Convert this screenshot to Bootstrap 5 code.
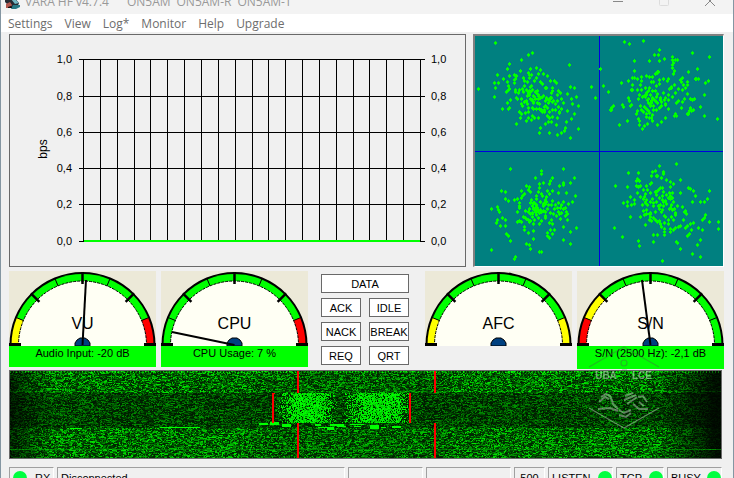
<!DOCTYPE html>
<html lang="en">
<head>
<meta charset="utf-8">
<meta name="viewport" content="width=device-width, initial-scale=1">
<title>VARA HF v4.7.4</title>
<link href="https://cdn.jsdelivr.net/npm/bootstrap@5.3.0/dist/css/bootstrap.min.css" rel="stylesheet">
<style>
body { background: #f0f0f0; color: #000; font: 11px/14px "Liberation Sans", Arial, sans-serif; }
.app-window { border-left: 1px solid #8496a2; border-right: 1px solid #8496a2; }
.title-strip { height: 26px; margin-top: -12px; background: #f3f3f3; color: #999; font: 12px/16px "Open Sans", sans-serif; padding-left: 4px; }
.title-strip button { width: 46px; height: 26px; }
.title-text { gap: 6px; padding-top: 2px; }
.menu-strip { height: 18px; padding: 2px 7px 0; gap: 12px; font: 12px/16px "Open Sans", sans-serif; }
.menu-strip a { color: #6d6d6d; }
.work-area { padding: 2px 9px 0 8px; }
.top-panels { display: grid; grid-template-columns: minmax(0, 457fr) minmax(0, 251fr); gap: 7px; margin-bottom: 4px; }
.speed-panel { border: 1px solid #696969; }
.iq-panel { background: #008080; border: 1px solid #fff; border-top: 2px solid #808080; border-left: 2px solid #808080; }
svg text { font-family: "Liberation Sans", Arial, sans-serif; }
.meter-row { display: grid; grid-template-columns: minmax(0, 299fr) minmax(0, 117fr) minmax(0, 299fr); min-height: 99px; }
.meter-pair { gap: 5px; }
.meter-pair > figure { flex: 1 1 0; }
.meter-face { background: #ece9d8; }
.meter-face text { font-size: 16px; text-anchor: middle; }
.meter-note { background: #0f0; min-height: 21px; }
.meter-note-tall { min-height: 23px; }
.frame-keys { padding: 3px 16px 0 13px; }
.key-grid { display: grid; grid-template-columns: minmax(0, 1fr) minmax(0, 1fr); gap: 5px 8px; }
.key-grid button { height: 19px; border: 1px solid #696969; background: #fff; line-height: 14px; white-space: nowrap; }
.key-wide { grid-column: 1 / 3; }
.waterfall { border: 1px solid #696969; margin-right: 2px; }
.waterfall canvas { height: 87px; image-rendering: pixelated; }
.watermark { right: 61px; top: -25px; width: 72px; height: 84px; }
.status-strip { display: grid; grid-template-columns: minmax(0, 45fr) minmax(0, 288fr) minmax(0, 75fr) minmax(0, 85fr) minmax(0, 31fr) minmax(0, 65fr) minmax(0, 48fr) minmax(0, 55fr); padding-top: 8px; gap: 3px; margin-right: 2px; }
.status-cell { height: 22px; border: 1px solid #fff; border-top-color: #a0a0a0; border-left-color: #a0a0a0; padding: 0 3px; }
.lamp { width: 14px; height: 14px; background: #00ff40; }
</style>
<script src="https://cdn.jsdelivr.net/npm/bootstrap@5.3.0/dist/js/bootstrap.bundle.min.js"></script>
</head>
<body>
<div class="app-window vh-100 overflow-hidden">
  <header class="title-strip d-flex align-items-center">
    <svg width="16" height="16" viewBox="0 0 16 16" aria-hidden="true">
      <path d="M0 4h9l5 6-2 5H6L0 9z" fill="#252b33"/>
      <path d="M1 11l4-2 2 3-2 3H1z" fill="#b45950"/>
      <path d="M6 6l5 1 3 3-4 1z" fill="#74b7c3"/>
      <path d="M8 12h7v2l-4 2H6z" fill="#287985"/>
      <path d="M3 14l3-1 1 2H3z" fill="#111"/>
    </svg>
    <div class="title-text d-flex ms-1 me-auto text-nowrap"><span class="me-2 pe-1">VARA HF v4.7.4</span><span>ON5AM</span><span>ON5AM-R</span><span>ON5AM-T</span></div>
    <button type="button" class="btn p-0 border-0 rounded-0 d-flex align-items-center justify-content-center" aria-label="Minimize"><svg width="10" height="10" viewBox="0 0 10 10"><path d="M0 5.5h10" stroke="#888"/></svg></button>
    <button type="button" class="btn p-0 border-0 rounded-0 d-flex align-items-center justify-content-center" aria-label="Maximize"><svg width="10" height="10" viewBox="0 0 10 10"><rect x=".5" y=".5" width="9" height="9" rx="1" fill="none" stroke="#dcdcdc"/></svg></button>
    <button type="button" class="btn p-0 border-0 rounded-0 d-flex align-items-center justify-content-center" aria-label="Close"><svg width="10" height="10" viewBox="0 0 10 10"><path d="M0 0l10 10M10 0L0 10" stroke="#888"/></svg></button>
  </header>
  <nav class="menu-strip d-flex align-items-center bg-white" aria-label="Main menu">
    <a class="text-decoration-none" href="#">Settings</a>
    <a class="text-decoration-none" href="#">View</a>
    <a class="text-decoration-none" href="#">Log*</a>
    <a class="text-decoration-none" href="#">Monitor</a>
    <a class="text-decoration-none" href="#">Help</a>
    <a class="text-decoration-none" href="#">Upgrade</a>
  </nav>

  <main class="work-area">
    <section class="top-panels">
      <div class="speed-panel">
        <svg id="speed" class="d-block w-100 h-auto" viewBox="0 0 455 231" role="img" aria-label="Speed in bps"></svg>
      </div>
      <div class="iq-panel">
        <svg id="iq" class="d-block w-100 h-100" viewBox="15 18 744 690" preserveAspectRatio="none" shape-rendering="crispEdges" role="img" aria-label="Constellation"></svg>
      </div>
    </section>

    <section class="meter-row">
      <div class="meter-pair d-flex">
        <figure class="m-0">
          <svg class="meter-face d-block w-100 h-auto" viewBox="0 0 147 75" data-label="VU" data-zones="yggggggr" data-needle="77,9"></svg>
          <figcaption class="meter-note text-center">Audio Input: -20 dB</figcaption>
        </figure>
        <figure class="m-0">
          <svg class="meter-face d-block w-100 h-auto" viewBox="0 0 147 75" data-label="CPU" data-zones="gggggggr" data-needle="11,61"></svg>
          <figcaption class="meter-note text-center">CPU Usage: 7 %</figcaption>
        </figure>
      </div>
      <div class="frame-keys">
        <div class="key-grid">
          <button type="button" class="key-wide p-0">DATA</button>
          <button type="button" class="p-0">ACK</button>
          <button type="button" class="p-0">IDLE</button>
          <button type="button" class="p-0">NACK</button>
          <button type="button" class="p-0">BREAK</button>
          <button type="button" class="p-0">REQ</button>
          <button type="button" class="p-0">QRT</button>
        </div>
      </div>
      <div class="meter-pair d-flex">
        <figure class="m-0">
          <svg class="meter-face d-block w-100 h-auto" viewBox="0 0 147 75" data-label="AFC" data-zones="yggggggy"></svg>
        </figure>
        <figure class="m-0">
          <svg class="meter-face d-block w-100 h-auto" viewBox="0 0 147 75" data-label="S/N" data-zones="rygggggg" data-needle="65,9"></svg>
          <figcaption class="meter-note meter-note-tall text-center">S/N (2500 Hz): -2,1 dB</figcaption>
        </figure>
      </div>
    </section>

    <section class="waterfall position-relative">
      <canvas id="fall" class="d-block w-100" width="711" height="87" role="img" aria-label="Waterfall"></canvas>
      <svg class="watermark position-absolute pe-none" viewBox="0 0 72 84" aria-hidden="true">
        <g fill="none" stroke="#b9d8b9" stroke-opacity=".5" stroke-width="1.2">
          <path d="M1 21L36 1 71 21" stroke="#407840"/>
          <path d="M1 62L36 82 71 62"/>
          <circle cx="36" cy="17" r="3" stroke="#407840"/>
          <path d="M34 24h5M34 10h5" stroke="#407840"/>
          <path d="M11 56l6-5 4 2M13 51l5-3 4 2 3 7M37 50l8-3M36 54l12-5M39 58l10-7M50 51l5-1 4 6M51 56l5 4M10 63l12-1 8 3M24 57l6 6M31 64l5 3 7-3M45 58l6 5 9 0M31 69l7 2 5-4" stroke-width="2"/>
        </g>
        <g font-size="10" font-weight="700" fill="#d0e0d0" fill-opacity=".55" text-anchor="middle"><text x="18" y="33">UBA</text><text x="54" y="33">LCE</text></g>
      </svg>
    </section>

    <footer class="status-strip text-nowrap">
      <div class="status-cell d-flex align-items-center gap-2"><span class="lamp rounded-circle flex-shrink-0"></span>RX</div>
      <div class="status-cell d-flex align-items-center">Disconnected</div>
      <div class="status-cell"></div>
      <div class="status-cell"></div>
      <div class="status-cell d-flex align-items-center justify-content-center">500</div>
      <div class="status-cell d-flex align-items-center justify-content-between pe-0">LISTEN<span class="lamp rounded-circle flex-shrink-0"></span></div>
      <div class="status-cell d-flex align-items-center justify-content-between pe-0">TCP<span class="lamp rounded-circle flex-shrink-0"></span></div>
      <div class="status-cell d-flex align-items-center justify-content-between pe-0">BUSY<span class="lamp rounded-circle flex-shrink-0"></span></div>
    </footer>
  </main>
</div>

<script>
let seed = 4711;
function rnd() {
  seed = (seed * 1664525 + 1013904223) >>> 0;
  return seed / 4294967296;
}

// Speed chart: 20 time slots, 5 value steps
(function () {
  const rows = [[24, '1,0'], [61, '0,8'], [97, '0,6'], [133, '0,4'], [169, '0,2'], [206, '0,0']];
  let s = '<g shape-rendering="crispEdges">';
  for (let i = 0; i <= 20; i++) {
    s += `<rect x="${Math.round(73 + i * 16.85)}" y="24" width="1" height="182"/>`;
  }
  for (const [y] of rows) s += `<rect x="69" y="${y}" width="346" height="1"/>`;
  s += '<rect x="74" y="205" width="336" height="2" fill="#0f0"/></g><g font-size="11">';
  for (const [y, t] of rows) {
    s += `<text x="62" y="${y + 4}" text-anchor="end">${t}</text><text x="421" y="${y + 4}">${t}</text>`;
  }
  s += '</g><text font-size="12" text-anchor="middle" transform="translate(37 114) rotate(-90)">bps</text>';
  document.getElementById('speed').innerHTML = s;
})();

// Constellation: measured symbols and the dense cores of the four clouds
(function () {
  const pts = `76 39 187 69 175 75 154 90 118 102 112 117 298 105 25 177 82 135 73 159 85 159 76 174 73 201 97 237 100 147 118 138 151 123 199 114 211 120 181 117 220 132 205 132 232 138 241 153 253 153 259 159 301 171 313 174 364 171 376 204 319 201 325 228 307 222 325 297 301 324 313 252 304 267 289 276 286 294 283 303 274 309 262 315 238 309 208 309 211 294 139 282 259 285 112 219 118 234 115 237 292 192 304 207 292 243 226 282 169 273 151 264 148 246 112 156 112 183 109 186 118 177 115 168 133 135 139 138 136 147 133 150 160 144 163 153 172 156 178 135 178 144 184 135 199 144 211 156 217 162 226 174 247 174 247 183 265 183 271 189 262 195 274 207 280 219 262 213 265 231 274 237 268 246 262 264 256 240 247 261 238 264 232 258 244 276 223 231 214 240 208 237 217 246 199 237 205 264 193 264 187 258 175 264 184 270 142 207 154 207 154 222 157 228 163 216 172 222 169 213 190 219 187 234 175 234 166 249 154 252 172 198 178 195 181 207 178 183 169 180 160 186 148 180 145 189 139 204 136 186 187 180 196 186 202 192 190 198 196 207 205 207 208 222 220 198 229 204 226 213 238 213 235 219 244 204 250 213 232 234 238 246 256 222 193 153 184 168 163 168
  463 36 478 42 520 33 568 60 565 75 553 75 667 69 718 81 493 93 538 93 568 93 583 87 607 81 607 90 616 90 622 90 610 99 607 105 607 114 613 123 610 132 682 117 655 126 637 144 679 147 685 147 676 147 715 153 706 159 742 267 703 195 703 258 691 231 673 207 667 210 661 207 661 234 658 243 664 243 670 240 655 252 652 252 616 252 619 258 613 258 595 237 391 117 400 168 415 186 424 240 424 234 430 228 421 240 448 285 457 225 460 231 472 273 475 204 478 213 481 228 484 225 454 159 475 153 493 123 487 144 493 144 502 147 487 165 487 180 514 153 511 165 514 141 529 138 538 141 547 141 556 132 562 129 565 126 544 156 550 156 568 150 568 162 559 168 556 183 562 192 547 183 535 183 538 174 526 174 529 189 523 198 529 195 541 195 550 207 535 207 544 213 535 219 541 225 556 213 562 219 571 210 574 216 583 210 586 225 595 210 574 228 568 234 559 240 550 240 547 255 544 264 538 249 529 237 523 231 520 246 514 240 511 228 505 207 502 180 508 195 517 201 502 243 499 252 505 267 508 273 508 285 523 288 517 297 532 282 538 264 547 273 562 285 574 276 529 261 586 264 580 189 595 195 598 177 604 171 607 201 616 189 613 165 625 177 631 150 634 156 640 165 646 174 652 156 652 165 637 180 652 192 643 207 637 216 625 213 619 219 634 234 592 153 595 147 580 147
  121 417 214 423 214 432 280 417 196 444 313 444 247 444 241 453 238 462 280 459 280 465 301 459 169 468 178 471 175 480 181 486 94 483 106 486 106 507 115 513 133 510 142 507 154 483 157 498 163 492 154 504 148 519 142 546 148 534 64 537 82 531 85 540 88 546 97 564 106 570 82 570 79 579 91 588 106 588 109 612 115 618 121 633 64 660 136 681 133 687 169 642 178 645 181 657 190 627 208 666 214 666 280 630 301 642 301 606 280 591 319 594 292 570 286 558 292 552 289 546 265 546 259 558 271 567 274 549 247 582 238 579 253 600 241 600 232 609 232 618 238 624 247 612 226 564 214 573 208 582 190 582 178 576 175 570 163 591 163 600 175 609 190 603 148 573 142 576 154 576 166 564 160 561 181 552 187 549 196 546 190 537 187 528 190 519 196 534 202 540 211 540 220 528 226 522 229 516 235 525 232 537 241 549 250 552 229 501 217 498 214 492 205 486 208 462 220 459 199 498 199 507 193 519 184 510 181 519 238 492 247 483 265 489 289 489 316 498 307 516 295 522 286 534 280 516 274 525 265 519 256 525 253 537 262 534 244 525 247 513 232 483 178 537 175 546 187 561 199 555 205 564 193 570 208 549 220 543 271 534 280 537
  619 402 568 408 505 429 475 429 436 468 556 423 547 426 544 438 559 438 562 438 580 426 580 432 574 444 589 450 601 456 610 462 601 471 631 450 631 489 655 474 661 477 670 483 676 498 667 516 718 483 712 507 703 516 691 516 718 576 745 576 745 597 706 555 703 564 697 570 697 600 685 594 670 579 661 582 664 600 658 612 652 618 691 630 682 645 691 681 667 672 631 657 619 636 622 639 577 693 550 636 508 648 505 633 457 621 433 594 460 519 472 528 472 516 481 501 472 471 499 453 508 453 499 468 511 468 520 480 529 468 541 462 544 459 502 489 493 510 493 522 484 525 511 501 526 492 523 501 529 510 526 519 532 525 517 525 529 540 523 555 520 543 529 552 541 549 541 561 538 570 544 573 550 564 556 570 562 576 568 573 571 582 574 591 583 597 583 615 562 615 550 615 583 606 583 579 595 582 601 597 601 606 610 600 616 594 625 591 631 588 640 570 646 594 652 588 649 552 643 546 637 531 646 543 622 528 613 537 607 540 601 534 604 525 610 516 607 504 601 498 607 489 598 489 595 504 589 495 586 513 580 516 589 522 577 510 568 504 577 498 559 495 556 486 565 480 571 474 577 474 580 486 541 489 532 480 559 516 550 519 550 528 541 516 565 528 568 537 556 546 580 528 574 546 586 561 595 570 604 561 616 555 610 570 481 561 511 561`.split(/\s+/).map(Number);
  // centre x, centre y, spread x, spread y, tilt, extra symbols
  for (const [cx, cy, sx, sy, k, n] of [[200, 208, 50, 42, .35, 35], [548, 200, 40, 38, -.1, 18], [205, 540, 38, 36, -.3, 22], [560, 520, 50, 40, .35, 16]]) {
    for (let i = 0; i < n; i++) {
      const a = rnd() + rnd() + rnd() - 1.5, b = rnd() + rnd() + rnd() - 1.5;
      pts.push(Math.round((cx + a * 1.4 * sx) / 3) * 3 + 1, Math.round((cy + b * 1.4 * sy + a * k * sx) / 3) * 3);
    }
  }
  let d = '';
  for (let i = 0; i < pts.length; i += 2) {
    const x = pts[i], y = pts[i + 1];
    d += `M${x - 4} ${y - 3}h9v6h-9zM${x - 1} ${y - 6}h3v12h-3z`;
  }
  document.getElementById('iq').innerHTML =
    `<path fill="#0000e0" d="M387 18h3v690h-3zM15 363h744v3H15z"/><path fill="#0f0" d="${d}"/>`;
})();

// Half-circle meters
document.querySelectorAll('.meter-face').forEach(function (el) {
  const cx = 73.5, cy = 74, col = { y: '#ff0', r: '#f00', g: '#0f0' };
  const at = (r, a) => {
    const t = Math.PI * (1 - a / 8);
    return (cx + r * Math.cos(t)).toFixed(2) + ' ' + (cy - r * Math.sin(t)).toFixed(2);
  };
  let s = '<path d="M.5 75V74A73 73 0 0 1 146.5 74V75Z" fill="#000"/>';
  [...el.dataset.zones].forEach((z, i) => {
    s += `<path d="M${at(71, i)}A71 71 0 0 1 ${at(71, i + 1)}L${at(60, i + 1)}L${at(60, i)}Z" fill="${col[z]}"/>`;
  });
  s += '<path d="M9.5 75V74A64 64 0 0 1 137.5 74V75Z" fill="#fffff4" stroke="#000" stroke-dasharray="3 1"/><path d="M10 73h127v2H10z" fill="#fffff4"/>';
  for (let i = 1; i < 8; i++) {
    s += i % 2 ? `<path d="M${at(72, i)}L${at(64, i)}" stroke="#000"/>` : `<path d="M${at(73, i)}L${at(61, i)}" stroke="#000" stroke-width="2.5"/>`;
  }
  s += '<path d="M0 73.5h12M135 73.5h12" stroke="#000" stroke-width="3"/>';
  s += '<path d="M66 75v-3l2-3 3-2h5l3 2 2 3v3z" fill="#004080" stroke="#000"/>';
  s += `<text x="73.5" y="58">${el.dataset.label}</text>`;
  if (el.dataset.needle) s += `<path d="M${el.dataset.needle}L73.5 74" stroke="#000" stroke-width="2"/>`;
  el.innerHTML = s;
});

// Waterfall: band noise, two signal bursts and the passband markers
(function () {
  const c = document.getElementById('fall'), g = c.getContext('2d'), W = 711, H = 87;
  const im = g.createImageData(W, H);
  for (let y = 0; y < H; y++) {
    let last = 0;
    for (let x = 0; x < W; x++) {
      const mid = y >= 22 && y < 57;
      let m = mid ? 66 : 104;
      if (x > 240 && x < 440 && !mid) m = 92;
      m *= Math.min(1, .32 + x / 65) * Math.min(1, Math.max(.1, (W - x) / 65));
      if (rnd() > .3) last = .3 + Math.pow(rnd(), 1.7) * 1.9;
      let v = m * last + 4;
      if (y === 78) v = Math.max(v, 85 + rnd() * 70);
      if (y === 20) v += 45 * rnd();
      if (y < 2 && x % 3 === 0) v += 90;
      if (y >= 22 && y < 52) {
        const a = Math.min((x - 265) / 22, (327 - x) / 16), b = Math.min((x - 331) / 22, (401 - x) / 16);
        const p = Math.min(1, Math.max(a, b, 0)) * .8;
        if (rnd() < p) v = 190 + rnd() * 80;
      }
      const i = (y * W + x) * 4;
      im.data[i + 1] = Math.min(255, v);
      im.data[i + 3] = 255;
    }
  }
  g.putImageData(im, 0, 0);
  g.fillStyle = '#0f0';
  for (const [x, y, w, h] of [[249, 52, 9, 2], [260, 51, 9, 3], [272, 53, 9, 3], [305, 53, 6, 2], [320, 53, 14, 2], [308, 56, 16, 1], [317, 57, 7, 2], [327, 55, 9, 1], [340, 53, 14, 1], [344, 55, 7, 1], [360, 54, 9, 4], [371, 56, 5, 1], [382, 55, 9, 2], [150, 56, 40, 1], [60, 57, 12, 1]]) g.fillRect(x, y, w, h);
  g.fillStyle = '#f00';
  for (const x of [287, 424]) { g.fillRect(x, 0, 2, 22); g.fillRect(x, 52, 2, 35); }
  g.fillRect(262, 22, 2, 30);
  g.fillRect(262, 22, 3, 1);
  g.fillRect(399, 22, 2, 30);
})();
</script>
</body>
</html>
